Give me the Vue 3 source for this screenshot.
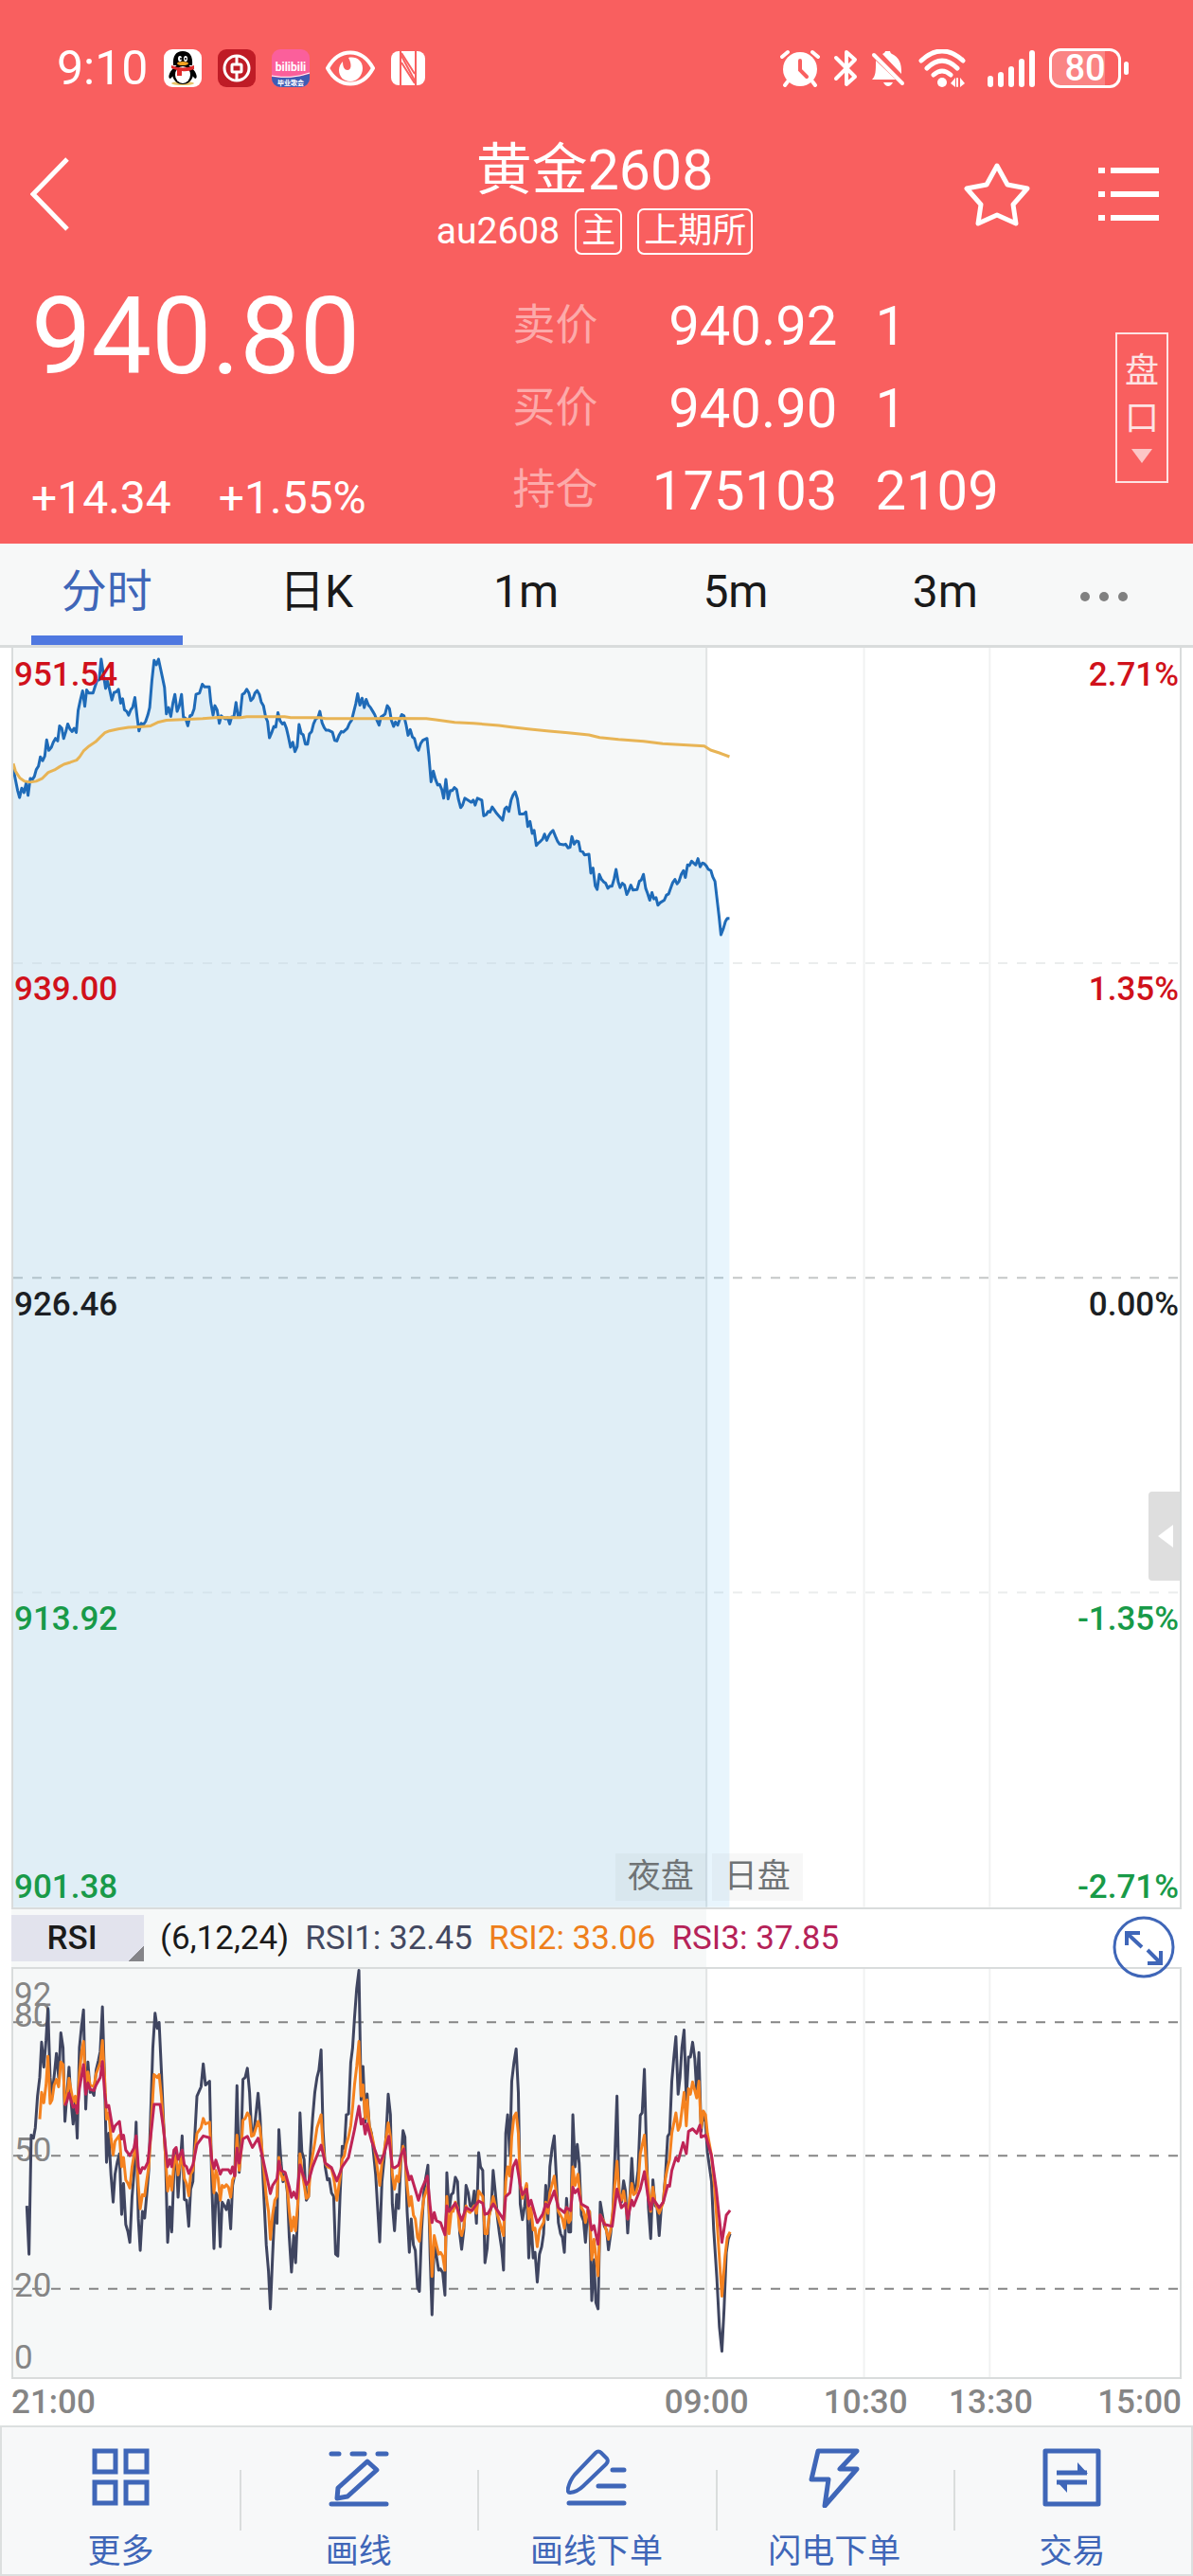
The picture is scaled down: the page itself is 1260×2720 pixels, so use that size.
<script setup>
import { ref } from 'vue'

const tabs = ['分时', '日K', '1m', '5m', '3m']
const activeTab = ref('分时')

const quotes = [
  { label: '卖价', value: '940.92', extra: '1' },
  { label: '买价', value: '940.90', extra: '1' },
  { label: '持仓', value: '175103', extra: '2109' }
]

const levels = [
  { price: '951.54', percent: '2.71%', top: 0, tone: 'up' },
  { price: '939.00', percent: '1.35%', top: 25, tone: 'up' },
  { price: '926.46', percent: '0.00%', top: 50, tone: 'flat' },
  { price: '913.92', percent: '-1.35%', top: 75, tone: 'down' }
]

const rsiLegend = [
  { text: 'RSI1: 32.45', tone: 'rsi1' },
  { text: 'RSI2: 33.06', tone: 'rsi2' },
  { text: 'RSI3: 37.85', tone: 'rsi3' }
]

// the second half of every series counts x from 1200
const HALF = 1200

function join(first, second) {
  const shifted = second.split(' ').map((p) => {
    const [x, y] = p.split(',')
    return Number(x) + HALF + ',' + y
  })
  return first + ' ' + shifted.join(' ')
}

const price = join(
  '39,390 46,425 53,460 59,482 66,452 73,466 80,436 86,475 93,421 100,424 106,415 112,393 119,382 125,353 132,365 139,350 145,299 152,332 160,322 166,306 173,294 180,302 186,254 193,262 199,294 206,272 212,248 219,264 226,272 232,262 239,275 245,205 252,172 259,143 266,192 272,140 279,150 292,150 299,128 305,110 312,108 318,42 325,88 332,135 338,112 345,140 352,172 359,148 366,146 373,138 380,182 386,168 392,203 399,208 405,220 412,203 418,195 425,164 432,225 438,270 445,246 452,250 459,240 466,220 472,196 479,110 486,46 493,60 500,42 506,70 512,98 519,132 525,216 532,196 539,224 546,180 552,154 559,208 566,190 573,154 579,226 586,230 593,254 600,222 606,220 613,200 619,154 630,150 639,122 646,130 661,130 666,180 673,220 679,190 686,204 693,246 699,222 706,228 713,232 719,228 726,248 732,226 739,226 746,180 753,226 759,220 766,154 773,150 780,138 787,150 793,174 800,166 806,150 813,142 820,154 826,178 833,190 840,226 846,240 852,292 859,276 866,256 872,258 879,212 886,238 893,248 899,244 906,262 912,288 919,322 926,306 933,336 940,320 946,250 953,278 959,282 966,312 973,312 979,280 986,272 992,248 999,232 1006,228 1012,208 1019,244 1026,260 1032,268 1040,268 1052,274 1059,300 1066,302 1073,284 1080,272 1086,274 1099,262 1106,246 1113,236 1119,212 1126,184 1132,152 1139,188 1146,166 1153,196 1159,170 1166,188 1173,196 1180,208 1186,218 1193,236',
  '0,252 6,226 12,222 19,216 26,190 33,200 39,236 46,256 52,242 59,252 66,232 72,218 79,222 86,252 92,284 99,266 106,290 112,294 119,322 125,332 132,310 139,300 152,294 158,350 165,432 172,398 179,424 186,442 192,440 199,456 205,484 212,424 219,486 226,460 232,460 239,450 246,456 252,488 259,514 265,506 272,484 285,492 292,497 299,490 305,506 312,484 326,490 332,540 340,536 346,526 352,528 359,512 366,522 373,532 380,540 392,554 399,518 405,512 412,526 419,490 425,474 432,464 439,486 446,534 459,534 466,528 472,574 479,558 486,596 492,586 499,634 506,626 513,620 519,614 525,598 532,618 539,602 546,592 552,586 560,606 566,620 573,630 586,632 592,630 600,642 606,640 612,606 619,630 626,620 633,622 639,652 646,654 652,664 666,662 672,722 679,706 686,762 692,774 699,726 706,742 713,750 719,754 726,770 732,764 739,764 746,740 752,710 759,750 765,768 772,754 779,760 786,790 793,776 799,760 806,776 819,774 826,748 832,744 839,726 846,770 852,786 859,808 866,784 872,804 879,800 885,824 892,816 905,808 912,792 919,788 926,768 932,752 939,742 946,756 952,748 959,726 966,714 972,736 979,696 985,698 992,684 1005,696 1012,676 1019,702 1026,690 1032,692 1039,700 1045,710 1053,714 1059,734 1066,748 1072,800 1079,860 1085,918 1092,900 1099,876 1105,866 1112,866'
)
const area = price + ' 2312,4008 39,4008'

const average = join(
  '39,374 46,398 60,420 75,430 93,433 112,430 130,422 150,402 170,394 186,384 200,376 220,370 240,363 250,352 262,334 280,318 300,305 315,290 330,276 345,270 372,264 405,259 438,257 475,254 500,242 525,236 593,233 640,231 690,227 760,228 780,225 900,225 920,228 1010,228 1030,231 1190,231',
  '26,230 150,231 180,235 240,243 300,246 380,253 420,258 480,265 540,271 600,276 666,283 700,291 760,297 840,303 900,311 1032,318 1052,331 1080,340 1112,352'
)

const rsi1 = join(
  '82,985 89,1115 96,795 103,803 109,775 116,690 123,640 129,545 136,612 143,540 149,455 156,640 162,690 169,635 176,575 183,640 190,520 197,560 203,758 209,690 216,612 222,700 229,765 236,705 242,803 249,560 256,500 262,458 269,725 276,598 283,680 289,675 295,688 302,620 309,595 315,570 322,450 329,650 335,868 342,790 349,900 356,975 362,900 369,868 376,845 383,1008 389,925 396,1035 403,1055 409,1083 416,960 422,900 429,760 436,1020 442,1105 449,1000 456,1018 462,960 469,890 475,740 482,560 489,467 496,508 502,492 509,620 516,760 522,850 529,1083 536,988 542,1055 549,890 556,840 562,962 569,870 575,797 582,968 589,970 596,1040 602,940 609,920 615,800 622,690 635,665 642,603 649,660 662,650 669,920 676,1100 682,950 689,960 696,1095 702,975 709,985 715,995 722,970 729,1047 735,930 742,900 749,662 756,895 762,820 768,645 775,640 782,615 789,680 795,780 802,790 809,740 816,682 822,740 829,860 835,970 842,1090 849,1160 855,1262 862,1120 869,990 876,1032 882,780 889,870 895,920 902,900 909,950 915,1070 922,1163 929,1065 935,1138 942,1000 949,735 955,840 962,860 969,970 976,960 982,840 989,750 996,680 1003,640 1009,620 1016,566 1022,780 1029,880 1036,915 1042,912 1049,950 1056,960 1062,1115 1069,1120 1076,960 1083,825 1090,830 1096,740 1103,738 1110,600 1116,560 1122,480 1129,400 1136,352 1143,700 1149,610 1156,760 1162,684 1169,770 1176,790 1182,840 1189,900 1195,985',
  '2,1082 9,920 16,860 22,800 29,685 36,740 42,980 49,1052 56,955 62,992 69,870 76,783 82,800 89,1000 96,1110 102,1020 109,1090 115,1105 122,1205 128,1215 135,1050 142,950 148,910 155,876 162,1120 168,1278 175,1080 182,1120 189,1158 195,1155 202,1165 209,1225 215,896 222,1000 229,955 235,950 242,908 249,920 256,1060 262,1102 269,1050 276,930 283,950 289,985 295,988 302,945 309,1032 316,842 322,880 329,890 336,1138 343,1100 349,1010 356,990 362,890 369,950 376,1020 382,1060 389,1100 395,1158 402,790 408,740 415,850 421,650 428,600 435,563 442,680 448,980 455,1022 462,985 468,930 475,1125 482,1020 489,1125 495,1110 502,1190 509,1115 516,1095 522,1060 529,930 536,1022 542,880 549,830 556,797 562,900 569,1030 576,1060 582,1070 588,1110 595,965 602,1055 608,1055 615,740 622,880 629,820 635,870 642,1010 649,1025 655,1083 662,1000 668,1000 675,1240 682,1130 688,1245 695,1262 702,975 709,1010 715,1040 722,1050 728,1103 735,1060 742,1000 748,860 755,690 762,960 769,975 776,918 782,945 789,1058 795,980 802,857 808,950 815,935 822,890 829,742 835,735 842,618 849,850 855,990 862,1073 869,915 876,985 882,985 889,1065 896,985 902,975 909,900 916,798 922,790 929,650 935,590 942,530 949,685 955,640 961,560 968,512 975,700 982,585 988,585 995,545 1002,590 1008,680 1015,573 1022,785 1029,732 1036,760 1042,840 1055,920 1062,1050 1072,1180 1080,1310 1088,1376 1095,1260 1102,1110 1108,1075 1114,1060'
)

const rsi2 = join(
  '123,752 129,680 136,708 143,660 149,583 156,710 162,700 169,660 176,645 183,665 190,598 197,605 203,712 209,700 216,642 229,705 236,690 242,735 249,630 256,570 262,543 269,660 276,625 283,660 295,665 302,630 315,600 322,540 329,640 335,752 342,735 349,800 356,848 362,812 376,795 383,880 389,855 396,915 403,925 409,937 416,880 422,850 429,808 436,930 442,993 449,955 456,958 462,920 469,880 475,800 482,690 486,632 496,640 502,632 509,690 516,770 529,945 536,905 542,943 549,870 556,850 562,902 575,845 582,912 589,925 596,958 602,900 609,890 615,840 622,790 635,775 642,750 649,765 662,760 669,870 676,950 682,890 689,910 696,970 702,930 709,935 715,928 722,935 729,962 735,915 742,905 749,795 756,890 762,840 768,755 775,750 782,735 789,745 795,798 802,795 816,758 822,775 829,840 842,960 849,1000 855,1075 862,1010 869,970 876,960 882,855 889,900 895,915 902,905 909,940 915,1000 922,1052 929,1015 935,1052 942,980 949,845 955,890 969,965 976,960 982,890 989,850 996,815 1003,775 1016,740 1022,825 1029,870 1036,880 1049,885 1056,910 1066,970 1076,910 1083,860 1090,850 1096,820 1103,800 1110,770 1116,720 1122,660 1129,610 1136,543 1143,690 1149,660 1156,750 1162,700 1169,770 1182,815 1189,850',
  '2,930 9,870 16,840 29,762 36,800 42,900 49,940 56,905 62,920 69,860 76,825 82,850 89,930 96,985 102,960 109,1010 115,1020 122,1070 128,1080 135,1010 142,965 155,930 162,1050 168,1175 175,1065 182,1090 189,1115 195,1110 202,1120 209,1158 215,960 222,1060 229,1000 235,1000 242,975 249,990 256,1050 262,1065 269,1040 276,985 283,1000 289,1003 302,985 309,1005 316,945 329,960 336,1060 343,1060 349,1015 362,960 369,985 376,1010 395,1065 402,920 408,880 415,905 421,800 428,745 435,735 442,790 448,930 455,965 468,925 475,1020 482,990 489,1050 495,1045 502,1095 509,1050 522,1030 529,975 536,1005 542,950 556,905 562,950 569,1000 582,1020 588,1045 595,990 602,1030 608,1022 615,880 622,930 631,900 642,990 649,1000 655,1030 662,998 668,1000 675,1130 682,1075 695,1173 702,1010 715,1030 728,1075 735,1050 742,1000 748,930 755,865 762,950 769,970 776,945 789,1020 795,970 802,925 808,955 815,950 822,930 829,845 842,795 849,890 862,1000 869,935 876,975 889,1005 902,975 909,910 916,880 922,860 929,790 942,735 949,782 955,770 968,680 975,770 982,670 988,685 995,652 1008,695 1015,650 1022,775 1029,730 1036,740 1042,790 1055,850 1065,940 1075,1060 1088,1228 1098,1120 1105,1070 1114,1055'
)

const rsi3 = join(
  '203,715 209,705 216,682 229,720 236,715 242,735 249,670 262,605 269,685 276,655 283,672 295,675 302,660 315,640 322,597 329,680 335,720 342,715 356,785 362,770 376,758 383,805 389,795 396,835 409,850 422,830 429,797 436,880 442,897 449,882 456,885 466,868 475,800 486,712 505,712 516,780 529,880 536,860 542,880 549,835 556,828 562,860 575,835 582,875 589,880 596,898 609,875 622,820 642,797 662,802 669,860 676,885 682,862 696,900 702,888 722,888 729,898 735,880 742,905 749,830 756,870 768,805 782,798 798,828 816,803 829,850 842,900 855,952 862,930 876,912 882,865 889,890 902,895 915,935 922,962 929,948 938,965 949,875 969,928 976,920 989,880 1016,822 1029,870 1049,882 1066,918 1083,880 1103,855 1122,780 1136,717 1143,765 1149,752 1156,792 1162,765 1176,810',
  '2,870 16,845 31,798 42,880 49,883 62,875 69,850 79,832 86,880 96,915 102,905 125,970 135,940 153,905 162,985 168,1030 175,1003 182,1025 195,1030 209,1063 215,985 222,1000 242,978 262,1025 276,990 295,998 316,972 329,978 336,1008 346,1005 362,980 395,1022 402,960 415,950 425,880 435,862 448,930 455,955 468,940 475,985 482,970 495,1010 502,1030 519,1008 529,980 536,988 556,945 569,990 588,1003 595,990 608,998 615,935 622,950 631,940 642,980 662,990 675,1050 682,1038 695,1088 702,1010 715,1035 740,1040 755,940 769,990 782,978 789,1020 802,970 808,985 829,940 842,893 855,970 862,995 869,965 889,990 902,975 916,930 922,932 929,890 942,855 949,865 965,815 975,845 982,785 995,778 1008,790 1018,768 1022,800 1036,795 1055,850 1070,940 1088,1083 1102,1010 1114,997'
)
</script>

<template>
  <div class="page">
    <header class="top">
      <div class="status">
        <div class="group">
          <span class="clock">9:10</span>
          <svg width="40" height="40" viewBox="0 0 40 40">
            <rect width="40" height="40" rx="9" fill="#fff" />
            <ellipse cx="20" cy="36" rx="12" ry="2" fill="#e9c46a" />
            <path d="M10 20C5 25 4 31 7 31l4-4zM30 20c5 5 6 11 3 11l-4-4z" fill="#000" />
            <ellipse cx="20" cy="26" rx="11" ry="11" fill="#000" />
            <ellipse cx="20" cy="27" rx="8" ry="9" fill="#fff" />
            <path d="M10 17C9 7 13 2 20 2s11 5 10 15z" fill="#000" />
            <ellipse cx="17" cy="10" rx="2" ry="3" fill="#fff" />
            <ellipse cx="23" cy="10" rx="2" ry="3" fill="#fff" />
            <circle cx="18" cy="10" r="1" />
            <circle cx="23" cy="10" r="1" />
            <ellipse cx="20" cy="15" rx="6" ry="2" fill="#f4a321" />
            <path d="M8 17q12 5 24 0v4q-7 3-13 2v5h-5v-6q-4-1-6-2z" fill="#e02b2b" />
          </svg>
          <svg width="40" height="40" viewBox="0 0 40 40" fill="none" stroke="#fff">
            <rect width="40" height="40" rx="9" fill="#bf1c26" stroke="none" />
            <circle cx="20" cy="20" r="13" stroke-width="3" />
            <rect x="15" y="16" width="10" height="8" rx="1" stroke-width="3" />
            <path d="M20 7v9M20 24v9" stroke-width="3" />
          </svg>
          <svg width="40" height="40" viewBox="0 0 40 40">
            <rect width="40" height="40" rx="9" fill="#fb5f9b" />
            <path d="M0 29q20 3 40-3v5a9 9 0 0 1-9 9H9a9 9 0 0 1-9-9z" fill="#3f5cb4" />
            <path d="M0 28q20 4 40-3" fill="none" stroke="#fff" />
            <text x="20" y="23" class="tiny-brand">bilibili</text>
            <text x="20" y="38" class="tiny-note">毕业歌会</text>
          </svg>
          <svg width="52" height="40" viewBox="0 0 52 40">
            <path d="M2 20C14 -2 38 -2 50 20C38 42 14 42 2 20z" fill="none" stroke="#fff" stroke-width="4" />
            <path d="M24 9c8-2 15 3 15 11s-6 14-13 14-12-5-12-12c0-4 2-7 4-9 0 6 2 9 5 9 4 0 5-6 1-13z" fill="#fff" />
          </svg>
          <svg width="36" height="38" viewBox="0 0 36 38">
            <rect y="1" width="36" height="36" rx="8" fill="#fff" />
            <path d="M10 1v36M26 1v36M10 4l16 30" fill="none" stroke="#f95f5f" stroke-width="2" />
            <path d="M11 13l14 22M11 3l14 22" fill="none" stroke="#f95f5f" stroke-width="2" />
          </svg>
        </div>
        <div class="group system">
          <svg width="42" height="40" viewBox="0 0 42 40" fill="none" stroke="#fff" stroke-linecap="round">
            <circle cx="21" cy="21" r="18" fill="#fff" stroke="none" />
            <path d="M2 8l6-5M40 8l-6-5M8 34l-3 4M34 34l3 4" stroke-width="4" />
            <path d="M21 12v10l7 7" stroke="#f95f5f" stroke-width="4" />
          </svg>
          <svg width="26" height="40" viewBox="0 0 26 40" fill="none" stroke="#fff" stroke-width="4" stroke-linecap="round" stroke-linejoin="round">
            <path d="M3 9l20 20-9 8V3l9 8L3 31" />
          </svg>
          <svg width="36" height="40" viewBox="0 0 36 40">
            <path d="M12 5c2-1 3-2 3-3h5c0 2 2 3 4 4 8 5 8 13 8 20z" fill="#fff" />
            <path d="M5 12l21 20H1c4-4 4-9 4-20z" fill="#fff" />
            <path d="M3 6l30 30" stroke="#fff" stroke-width="4" stroke-linecap="round" />
            <path d="M13 35h10q-2 4-5 4t-5-4z" fill="#fff" />
          </svg>
          <svg width="58" height="40" viewBox="0 0 58 40" fill="none" stroke="#fff" stroke-width="5" stroke-linecap="round">
            <path d="M3 12Q25-8 47 12M9 20Q25 4 41 20M16 27q9-8 18 0" />
            <circle cx="25" cy="35" r="5" fill="#fff" stroke="none" />
            <path d="M34 36l5-6v10zM49 36l-5-6v10z" fill="#fff" stroke="none" />
            <path d="M41 31v8" stroke-width="2" />
          </svg>
          <svg width="52" height="40" viewBox="0 0 52 40" fill="#fff">
            <rect x="1" y="28" width="6" height="12" rx="3" />
            <rect x="12" y="24" width="6" height="16" rx="3" />
            <rect x="23" y="18" width="6" height="22" rx="3" />
            <rect x="34" y="10" width="6" height="30" rx="3" />
            <rect x="45" y="1" width="6" height="39" rx="3" />
          </svg>
          <span class="battery"><b>80</b></span>
        </div>
      </div>

      <div class="titlebar">
        <button class="plain" aria-label="返回">
          <svg width="42" height="78" viewBox="0 0 42 78" fill="none" stroke="#fff" stroke-width="5">
            <path d="M39 2L3 39l36 37" />
          </svg>
        </button>
        <div class="title">
          <h1>黄金2608</h1>
          <div class="sub">
            <span>au2608</span>
            <span class="chip">主</span>
            <span class="chip">上期所</span>
          </div>
        </div>
        <div class="actions">
          <button class="plain" aria-label="收藏">
            <svg width="70" height="68" viewBox="0 0 70 68" fill="none" stroke="#fff" stroke-width="5" stroke-linejoin="round">
              <path d="M35 4l11 20 21 4-15 17 3 20-20-9-20 9 3-20L3 28l21-4z" />
            </svg>
          </button>
          <button class="plain" aria-label="菜单">
            <svg width="64" height="58" viewBox="0 0 64 58" fill="none" stroke="#fff" stroke-width="6">
              <path d="M0 4h7M13 4h51M0 29h7M13 29h51M0 54h7M13 54h51" />
            </svg>
          </button>
        </div>
      </div>

      <div class="quote">
        <div class="last">
          <strong>940.80</strong>
          <p><span>+14.34</span><span>+1.55%</span></p>
        </div>
        <table>
          <tbody>
            <tr v-for="q in quotes" :key="q.label">
              <th scope="row">{{ q.label }}</th>
              <td class="value">{{ q.value }}</td>
              <td class="extra">{{ q.extra }}</td>
            </tr>
          </tbody>
        </table>
        <button class="depth">
          <span>盘</span>
          <span>口</span>
          <svg width="22" height="15" viewBox="0 0 22 15"><path d="M0 0h22L11 15z" fill="#fcc6c6" /></svg>
        </button>
      </div>
    </header>

    <nav class="tabs">
      <button v-for="tab in tabs" :key="tab" :class="{ active: tab == activeTab }" @click="activeTab = tab">
        {{ tab }}
      </button>
      <button class="more" aria-label="更多周期">
        <svg width="50" height="10" viewBox="0 0 50 10" fill="#808080">
          <circle cx="5" cy="5" r="5" />
          <circle cx="25" cy="5" r="5" />
          <circle cx="45" cy="5" r="5" />
        </svg>
      </button>
    </nav>

    <main class="charts">
      <section class="plot price">
        <svg class="canvas" viewBox="39 6 3702 4002" preserveAspectRatio="none">
          <path class="grid" d="M2239 6V4008" />
          <path class="grid thin" d="M2739 6V4008M3138 6V4008" />
          <path class="dash faint" d="M39 1008H3741M39 3008H3741" />
          <path class="dash mid" d="M39 2008H3741" />
          <polygon class="area" :points="area" />
          <polyline class="line blue" :points="price" />
        </svg>
        <template v-for="l in levels" :key="l.price">
          <span class="label left" :class="l.tone" :style="{ top: l.top + '%' }">{{ l.price }}</span>
          <span class="label right" :class="l.tone" :style="{ top: l.top + '%' }">{{ l.percent }}</span>
        </template>
        <span class="label left lowest down">901.38</span>
        <span class="label right lowest down">-2.71%</span>
        <svg class="canvas over" viewBox="39 6 3702 4002" preserveAspectRatio="none">
          <polyline class="line amber" :points="average" />
        </svg>
        <span class="session night">夜盘</span>
        <span class="session day">日盘</span>
        <button class="drawer" aria-label="展开">
          <svg width="16" height="24" viewBox="0 0 16 24"><path d="M16 0v24L0 12z" fill="#fff" /></svg>
        </button>
      </section>

      <div class="rsi-head">
        <button class="indicator">RSI</button>
        <span>(6,12,24)</span>
        <span v-for="r in rsiLegend" :key="r.tone" :class="r.tone">{{ r.text }}</span>
        <button class="expand" aria-label="全屏">
          <svg width="66" height="66" viewBox="0 0 66 66" fill="none" stroke="#3f66b8">
            <circle cx="33" cy="33" r="31" stroke-width="3" />
            <path d="M15 31V18h14M16 19l15 14M37 36l14 14M37 50h14V37" stroke-width="4" />
          </svg>
        </button>
      </div>

      <section class="plot rsi">
        <span class="tick t92">92</span>
        <span class="tick t80">80</span>
        <span class="tick t50">50</span>
        <span class="tick t20">20</span>
        <span class="tick t0">0</span>
        <svg class="canvas over" viewBox="39 348 3702 1098" preserveAspectRatio="none">
          <path class="grid" d="M2239 348V1446" />
          <path class="grid thin" d="M2739 348V1446M3138 348V1446" />
          <path class="dash dark" d="M39 491H3741M39 850H3741M39 1208H3741" />
          <polyline class="line navy" :points="rsi1" />
          <polyline class="line orange" :points="rsi2" />
          <polyline class="line crimson" :points="rsi3" />
        </svg>
      </section>

      <div class="axis">
        <span>21:00</span>
        <span>09:00</span>
        <span>10:30</span>
        <span>13:30</span>
        <span>15:00</span>
      </div>
    </main>

    <footer class="toolbar">
      <button>
        <svg width="64" height="64" viewBox="0 0 64 64" stroke-width="5">
          <path d="M4 4h22v22H4zM37 4h22v22H37zM4 37h22v22H4zM37 37h22v22H37z" />
        </svg>
        更多
      </button>
      <button>
        <svg width="64" height="64" viewBox="0 0 64 64" stroke-width="5" stroke-linecap="round" stroke-linejoin="round">
          <path d="M3 7h8M25 7h13M52 7h9M3 60h58" />
          <path d="M41 15l10 9-31 28-11 2 1-11z" />
        </svg>
        画线
      </button>
      <button>
        <svg width="64" height="64" viewBox="0 0 64 64" stroke-width="5" stroke-linecap="round" stroke-linejoin="round">
          <path d="M3 59h58M34 41h27M49 24h12" />
          <path d="M31 6q3-3 6 0l6 6q2 3-1 6L18 41q-6 6-14 7-3 0-2-5 2-8 7-14z" stroke-width="4" />
        </svg>
        画线下单
      </button>
      <button>
        <svg width="64" height="64" viewBox="0 0 64 64" stroke-width="5" stroke-linejoin="round">
          <path d="M15 4h41L38 23h18L22 62l4-28H8z" />
        </svg>
        闪电下单
      </button>
      <button>
        <svg width="64" height="64" viewBox="0 0 64 64" stroke-width="5" stroke-linejoin="round">
          <rect x="4" y="4" width="56" height="56" />
          <path d="M16 27h32M16 37h32" />
          <path d="M38 16l11 12H38zM16 36h11v12z" fill="#3f66b8" stroke="none" />
        </svg>
        交易
      </button>
    </footer>
  </div>
</template>

<style>
body {
  margin: 0;
}
</style>

<style scoped>
.page {
  display: flex;
  flex-direction: column;
  min-height: 100vh;
  background: #fff;
  font-family: Roboto, 'Noto Sans CJK SC', sans-serif;
  color: #1a1a1a;
}
button {
  margin: 0;
  padding: 0;
  border: 0;
  background: none;
  font: inherit;
  color: inherit;
  cursor: pointer;
}
svg {
  display: block;
  flex: none;
}
.top {
  background: #f95f5f;
  color: #fff;
}
.status {
  display: flex;
  align-items: center;
  justify-content: space-between;
  height: 138px;
  padding: 3px 68px 0 60px;
}
.group {
  display: flex;
  align-items: center;
  gap: 17px;
}
.system {
  gap: 14px;
}
.clock {
  font-size: 50px;
}
.tiny-brand {
  font-size: 12px;
  font-weight: 700;
  text-anchor: middle;
  fill: #fff;
}
.tiny-note {
  font-size: 7px;
  font-weight: 700;
  text-anchor: middle;
  fill: #fff;
}
.battery {
  position: relative;
  box-sizing: border-box;
  width: 76px;
  height: 42px;
  margin-right: 8px;
  border: 3px solid #fff;
  border-radius: 12px;
  background: linear-gradient(to right, #fa8484 80%, transparent 80%);
  text-align: center;
}
.battery b {
  font-size: 38px;
  font-weight: 500;
  line-height: 36px;
}
.battery::after {
  content: '';
  position: absolute;
  top: 11px;
  right: -11px;
  width: 5px;
  height: 14px;
  border-radius: 3px;
  background: #fff;
}
.titlebar {
  display: grid;
  grid-template-columns: 1fr auto 1fr;
  align-items: center;
  padding: 0 36px 0 32px;
}
.title {
  padding-top: 4px;
  text-align: center;
}
h1 {
  margin: 0 0 5px;
  font-size: 59px;
  font-weight: 400;
  line-height: 70px;
}
.sub {
  display: flex;
  align-items: center;
  justify-content: center;
  gap: 16px;
  font-size: 39px;
  line-height: 49px;
}
.chip {
  padding: 0 5px;
  border: 2px solid #fff;
  border-radius: 7px;
  font-size: 36px;
  line-height: 45px;
}
.actions {
  display: flex;
  justify-content: flex-end;
  align-items: center;
  gap: 72px;
}
.quote {
  display: grid;
  grid-template-columns: 42% 1fr auto;
  align-items: center;
  padding: 31px 26px 13px 33px;
}
.last {
  display: flex;
  flex-direction: column;
  justify-content: space-between;
  align-self: stretch;
}
.last strong {
  font-size: 113px;
  font-weight: 400;
  line-height: 112px;
}
.last p {
  display: flex;
  gap: 50px;
  margin: 0;
  font-size: 48px;
  line-height: 70px;
}
table {
  justify-self: start;
  margin-left: 4px;
  border-collapse: collapse;
}
tr {
  height: 87px;
}
th,
td {
  padding: 0;
  line-height: 60px;
}
th {
  font-size: 45px;
  font-weight: 400;
  color: #fcaaaa;
}
.value {
  width: 253px;
  font-size: 58px;
  text-align: right;
}
.extra {
  padding-left: 40px;
  font-size: 58px;
}
.depth {
  display: flex;
  flex-direction: column;
  align-items: center;
  padding: 14px 8px 19px;
  border: 2px solid #fde3e3;
  font-size: 36px;
  line-height: 50px;
  color: #fde3e3;
}
.depth svg {
  margin-top: 7px;
}
.tabs {
  display: flex;
  padding-left: 2px;
  border-bottom: 3px solid #d9dcdc;
  background: #f7f8f8;
}
.tabs button {
  display: flex;
  flex-direction: column;
  align-items: center;
  width: 17.6%;
  padding-top: 4px;
  font-size: 48px;
  line-height: 93px;
}
.tabs button::after {
  content: '';
  width: 160px;
  height: 10px;
}
.tabs .active {
  color: #3f66b8;
}
.tabs .active::after {
  background: #4f78e0;
}
.tabs .more {
  width: 9%;
  justify-content: center;
}
.tabs .more::after {
  display: none;
}
.charts {
  display: flex;
  flex: 1;
  flex-direction: column;
  margin: 0 12px;
  background: linear-gradient(to right, #f6f8f8 59.4%, #fff 59.4%);
}
.plot {
  position: relative;
  box-sizing: border-box;
  border: solid #d9dcdc;
  border-width: 0 2px 2px;
}
.price {
  flex: 1;
  min-height: 600px;
}
.rsi {
  height: 16vh;
  min-height: 300px;
  border-top-width: 2px;
}
.canvas {
  position: absolute;
  top: 0;
  left: 0;
  width: 100%;
  height: 100%;
}
.canvas * {
  fill: none;
  vector-effect: non-scaling-stroke;
}
.over {
  pointer-events: none;
}
.canvas .grid {
  stroke: #e2e5e5;
  stroke-width: 2px;
}
.canvas .thin {
  stroke: #f1f2f2;
}
.dash {
  stroke-width: 2px;
  stroke-dasharray: 10px 10px;
}
.faint {
  stroke: #ebeded;
}
.mid {
  stroke: #c4c8c8;
}
.dark {
  stroke: #858585;
}
.canvas .area {
  fill: rgba(30, 155, 240, 0.1);
}
.line {
  stroke-width: 3px;
  stroke-linejoin: round;
}
.blue {
  stroke: #1f6bb8;
}
.amber {
  stroke: #e8b455;
}
.navy {
  stroke: #3f4560;
}
.orange {
  stroke: #f5821f;
}
.crimson {
  stroke: #bf2456;
}
.label {
  position: absolute;
  padding-top: 8px;
  font-size: 35px;
  font-weight: 500;
  line-height: 42px;
}
.left {
  left: 1px;
}
.right {
  right: 1px;
}
.lowest {
  bottom: 0;
}
.up {
  color: #d0111b;
}
.flat {
  color: #1c1f24;
}
.down {
  color: #189a48;
}
.session {
  position: absolute;
  bottom: 7px;
  padding: 0 13px;
  background: rgba(120, 120, 120, 0.06);
  font-size: 35px;
  line-height: 50px;
  color: #6f7375;
}
.night {
  right: 40.6%;
}
.day {
  left: 59.4%;
  margin-left: 6px;
}
.drawer {
  position: absolute;
  top: 67%;
  right: 0;
  padding: 35px 7px 35px 10px;
  border-radius: 4px 0 0 4px;
  background: #dedede;
}
.rsi-head {
  position: relative;
  display: flex;
  align-items: center;
  gap: 17px;
  height: 61px;
  font-size: 35px;
}
.indicator {
  align-self: stretch;
  width: 140px;
  margin: 6px 0;
  padding-right: 12px;
  background: linear-gradient(135deg, transparent 50%, #858589 50%) right bottom / 16px 16px no-repeat #e2e3ed;
  font-weight: 500;
}
.rsi1 {
  color: #434860;
}
.rsi2 {
  color: #ee7f1b;
}
.rsi3 {
  color: #b52258;
}
.expand {
  position: absolute;
  z-index: 1;
  top: 7px;
  right: 7px;
}
.tick {
  position: absolute;
  left: 1px;
  font-size: 35px;
  line-height: 40px;
  color: #858585;
}
.t92 {
  top: 8px;
}
.t80 {
  top: 7%;
}
.t50 {
  top: 40%;
}
.t20 {
  top: 73%;
}
.t0 {
  bottom: 0;
}
/* the three middle columns are centred on the vertical grid lines */
.axis {
  display: grid;
  grid-template-columns: 52.6% 13.6% 13.6% 7.8% 1fr;
  height: 49px;
  align-items: center;
  justify-items: center;
  background: #fff;
  font-size: 35px;
  font-weight: 500;
  color: #858585;
}
.axis span:first-child {
  justify-self: start;
}
.axis span:last-child {
  justify-self: end;
}
.toolbar {
  display: flex;
  border: 2px solid #dcdfdf;
  background: #f7f8f9;
  color: #3f66b8;
}
.toolbar button {
  display: flex;
  flex: 1 1 0;
  flex-direction: column;
  align-items: center;
  gap: 27px;
  padding: 21px 0 3px;
  font-size: 35px;
  line-height: 40px;
}
.toolbar button + button {
  background: linear-gradient(#dadddd, #dadddd) left 45px / 2px 64px no-repeat;
}
.toolbar svg {
  fill: none;
  stroke: #3f66b8;
}
</style>
